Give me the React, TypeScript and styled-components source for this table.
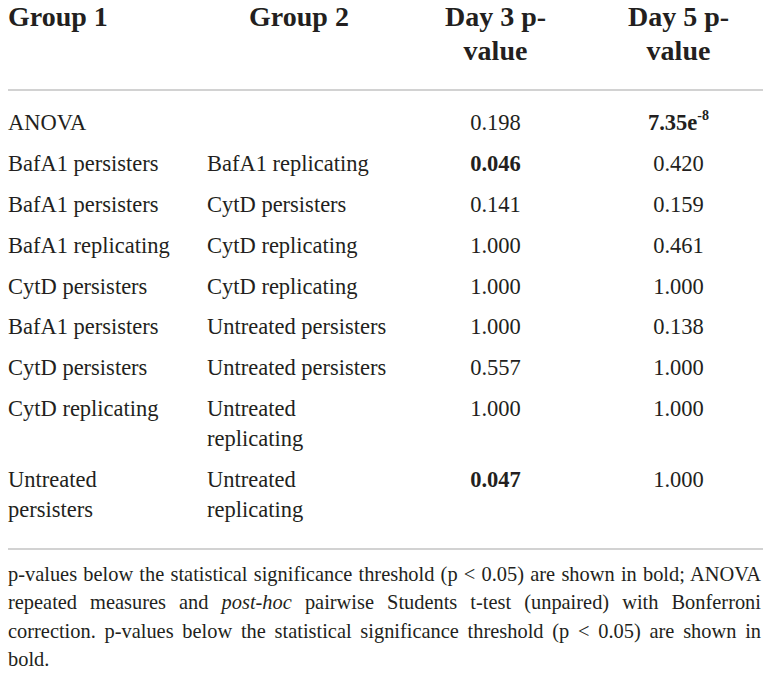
import React from "react";
import styled, { createGlobalStyle } from "styled-components";

const GlobalStyle = createGlobalStyle`
  html, body {
    margin: 0;
    padding: 0;
    background: #ffffff;
  }
  body {
    font-family: "Liberation Serif", "Times New Roman", serif;
    color: #231f20;
  }
`;

const COLUMNS = "199px 200px 193px 173px";

const Page = styled.div`
  width: 772px;
`;

const HeaderRow = styled.div`
  display: grid;
  grid-template-columns: ${COLUMNS};
  padding-bottom: 21px;
  font-size: 28px;
  font-weight: 700;
  line-height: 34px;
`;

const HeadCell = styled.div<{ $align: "left" | "center"; $pad: string }>`
  text-align: ${(p) => p.$align};
  padding: ${(p) => p.$pad};
`;

const Rule = styled.div`
  margin-left: 8px;
  width: 755px;
  height: 2px;
  background: #d2d2d2;
`;

const Body = styled.div`
  padding: 12px 0 18px;
`;

const Row = styled.div`
  display: grid;
  grid-template-columns: ${COLUMNS};
  padding: 5.4px 0;
  font-size: 22.5px;
  line-height: 30px;
`;

const NameCell = styled.div<{ $padRight: number }>`
  padding: 0 ${(p) => p.$padRight}px 0 8px;
`;

const ValueCell = styled.div<{ $bold?: boolean }>`
  text-align: center;
  font-weight: ${(p) => (p.$bold ? 700 : 400)};
`;

const Sup = styled.sup`
  font-size: 14px;
  line-height: 0;
  vertical-align: 0;
  position: relative;
  top: -10px;
`;

const Footer = styled.p`
  margin: 10px 0 0;
  padding: 0 11px 0 8px;
  font-size: 20.4px;
  line-height: 28.3px;
  text-align: justify;
`;

type Val = { text: React.ReactNode; bold?: boolean };
type RowData = { g1: string; g2: string; d3: Val; d5: Val };

const rows: RowData[] = [
  {
    g1: "ANOVA",
    g2: "",
    d3: { text: "0.198" },
    d5: {
      text: (
        <>
          7.35e<Sup>-8</Sup>
        </>
      ),
      bold: true,
    },
  },
  { g1: "BafA1 persisters", g2: "BafA1 replicating", d3: { text: "0.046", bold: true }, d5: { text: "0.420" } },
  { g1: "BafA1 persisters", g2: "CytD persisters", d3: { text: "0.141" }, d5: { text: "0.159" } },
  { g1: "BafA1 replicating", g2: "CytD replicating", d3: { text: "1.000" }, d5: { text: "0.461" } },
  { g1: "CytD persisters", g2: "CytD replicating", d3: { text: "1.000" }, d5: { text: "1.000" } },
  { g1: "BafA1 persisters", g2: "Untreated persisters", d3: { text: "1.000" }, d5: { text: "0.138" } },
  { g1: "CytD persisters", g2: "Untreated persisters", d3: { text: "0.557" }, d5: { text: "1.000" } },
  { g1: "CytD replicating", g2: "Untreated replicating", d3: { text: "1.000" }, d5: { text: "1.000" } },
  { g1: "Untreated persisters", g2: "Untreated replicating", d3: { text: "0.047", bold: true }, d5: { text: "1.000" } },
];

export default function App() {
  return (
    <Page>
      <GlobalStyle />
      <HeaderRow>
        <HeadCell $align="left" $pad="0 0 0 8px">Group 1</HeadCell>
        <HeadCell $align="center" $pad="0">Group 2</HeadCell>
        <HeadCell $align="center" $pad="0 40px">Day 3 p-value</HeadCell>
        <HeadCell $align="center" $pad="0 30px">Day 5 p-value</HeadCell>
      </HeaderRow>
      <Rule />
      <Body>
        {rows.map((r, i) => (
          <Row key={i}>
            <NameCell $padRight={26}>{r.g1}</NameCell>
            <NameCell $padRight={7}>{r.g2}</NameCell>
            <ValueCell $bold={r.d3.bold}>{r.d3.text}</ValueCell>
            <ValueCell $bold={r.d5.bold}>{r.d5.text}</ValueCell>
          </Row>
        ))}
      </Body>
      <Rule />
      <Footer>
        p-values below the statistical significance threshold (p &lt; 0.05) are shown in bold; ANOVA repeated
        measures and <i>post-hoc</i> pairwise Students t-test (unpaired) with Bonferroni correction. p-values
        below the statistical significance threshold (p &lt; 0.05) are shown in bold.
      </Footer>
    </Page>
  );
}
